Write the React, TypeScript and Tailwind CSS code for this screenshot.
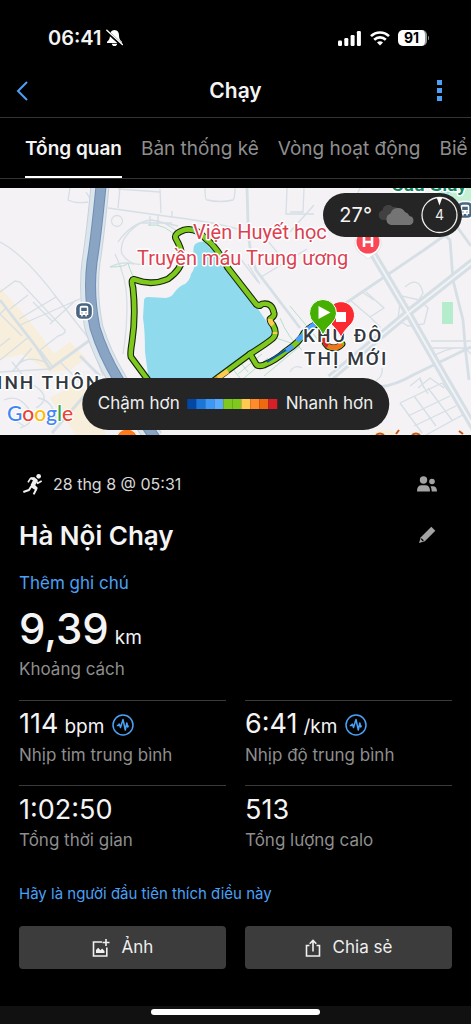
import type { ReactNode } from "react";

const paceColors = [
  "bg-[#0347a5]",
  "bg-[#1b76d9]",
  "bg-[#3d97f4]",
  "bg-[#59acff]",
  "bg-[#7fc91f]",
  "bg-[#7fc91f]",
  "bg-[#ffca4f]",
  "bg-[#ff8b2a]",
  "bg-[#ee690f]",
  "bg-[#d61f26]",
];

const tabs = ["Tổng quan", "Bản thống kê", "Vòng hoạt động", "Biể"];

const stats = [
  { value: "114", unit: "bpm", label: "Nhịp tim trung bình", chart: true },
  { value: "6:41", unit: "/km", label: "Nhịp độ trung bình", chart: true },
  { value: "1:02:50", unit: "", label: "Tổng thời gian", chart: false },
  { value: "513", unit: "", label: "Tổng lượng calo", chart: false },
];

function StatusBar() {
  return (
    <div className="flex h-16 items-end justify-between pr-[42px] pb-3 pl-12">
      <div className="flex h-7 items-center gap-1">
        <span className="text-xl font-semibold">06:41</span>
        <svg width="17" height="18" viewBox="0 0 17 18" aria-hidden="true">
          <path
            d="M8.500 1C5.500 1.200 4 3.400 4 6.200c0 3.200-.8 4.600-3 6.600v1.200h15v-1.200c-2.200-2-3-3.400-3-6.600C13 3.400 11.500 1.200 8.500 1zM5.800 14.700h5.400c-.3 1.600-1.300 2.300-2.700 2.300s-2.400-.7-2.700-2.300z"
            fill="#fff"
          />
          <path d="M.6 2.200l15.600 14.200" stroke="#000" strokeWidth="3" />
          <path d="M.8 1.200l15.600 14.400" stroke="#fff" strokeWidth="1.400" strokeLinecap="round" />
        </svg>
      </div>
      <div className="flex h-7 items-center gap-2">
        <svg width="24" height="15" viewBox="0 0 24 15" fill="#fff" aria-hidden="true">
          <rect x="0" y="9.500" width="4" height="5.500" rx="1.200" />
          <rect x="6.300" y="7" width="4" height="8" rx="1.200" />
          <rect x="12.600" y="4" width="4" height="11" rx="1.200" />
          <rect x="18.900" y="0" width="4" height="15" rx="1.200" />
        </svg>
        <svg width="20" height="15" viewBox="0 0 20 15" fill="none" stroke="#fff" strokeWidth="2.600" aria-hidden="true">
          <path d="M1 5.200C6 .2 14 .2 19 5.200" />
          <path d="M4.200 8.800c3.300-3.200 8.300-3.200 11.600 0" />
          <path d="M7 11.400c1.700-1.600 4.300-1.600 6 0L10 14.500z" fill="#fff" stroke="none" />
        </svg>
        <div className="flex items-center">
          <span className="flex h-4 w-[29px] items-center justify-center rounded-[5px] border-r-2 border-[#9a9a9a] bg-white text-sm font-bold text-black">
            91
          </span>
          <span className="ml-px h-1 w-px rounded-r bg-[#8a8a8a]" />
        </div>
      </div>
    </div>
  );
}

function BusStop({ x, y }: { x: number; y: number }) {
  return (
    <g transform={`translate(${x} ${y})`}>
      <rect x="-8.500" y="-8.500" width="17" height="17" rx="6" fill="#4a6580" stroke="#fff" strokeWidth="1.300" />
      <path d="M-4.300-3.500q0-1.700 2-1.700h4.600q2 0 2 1.700V4H2.800v1.500H1.300V4h-2.600v1.500h-1.500V4h-1.500z" fill="#fff" />
      <path d="M-2.800-3.300h5.600V0h-5.600z" fill="#4a6580" />
      <path d="M-2.600 2h1.200M1.400 2h1.200" stroke="#4a6580" strokeWidth="1.200" />
    </g>
  );
}

const route =
  "M148 192 L131 169 Q130 166 132 154 Q136 128 133 100 Q130 89 136 92 Q152 98 168 91 Q182 81 182 70 Q182 61 176 51 Q173 46 184 42 Q196 39 206 51 Q216 58 228 80 L256 116 Q259 119 262 116 Q272 114 274 125 Q275 128 270 131 Q270 134 273 137 Q278 146 272 151 Q266 156 250 166 L212 194";
const spur = "M250 166 L256 176 Q258 179 264 177 Q276 172 286 163 Q300 154 304 145 Q312 137 318 136 Q324 145 324 152 Q326 160 334 160 Q338 160 342 156";

function RouteMap() {
  return (
    <svg
      className="block h-[247px] w-full"
      viewBox="0 0 471 247"
      preserveAspectRatio="xMidYMid slice"
      role="img"
      aria-label="Bản đồ lộ trình"
    >
      <rect width="471" height="247" fill="#f4f2f4" />
      <g fill="#f7eedb">
        <path d="M0 100L22 124 38 144 54 166 70 154 86 170 70 182 50 184 22 166 0 172z" />
        <path d="M50 210l26-14 12 8 18 43H76l-14-20z" />
        <path d="M370 247q16-10 30 0z" />
      </g>
      <path d="M436 0h35v22l-28-6z" fill="#c4f0d6" />
      <path d="M440 3q8 6 20-3h-16z" fill="#8edced" />
      <rect x="442" y="114" width="11" height="22" fill="#b5eccb" />

      <g fill="none" stroke="#d5dfe5" strokeWidth="1.300">
        <path d="M0 54Q24 66 57 110L90 152 103 188M0 104L15 93 20 94 65 142Q66 146 58 148L40 162 52 178" />
        <path d="M10 121L28 107M19 131L56 109M20 137L82 110M33 114L53 134M50 136L76 112" />
        <path d="M0 126l22 22M6 120l-6 6M10 150l-10 8M30 148L0 172M60 174l20 20" />
        <path d="M70 0L68 12q8 4 20 2 M92 14l-6-10" />
        <path d="M108 20L172 29M120 0l-2 20M160 1l1 24M118 1l42 3M172 29v-6" />
        <circle cx="117" cy="33" r="5.500" />
        <path d="M118 54q14-20 34-22l26 6M122 66q-4-14 14-28t42 6M122 66q8 12 20 10" />
        <path d="M110 79q12-6 24-3M115 66q12 24 12 50t-4 50M150 28v10M158 28v10M142 35h30" />
        <path d="M205 0q0 12 2 12 14 3 26 0 2-2 2-12M287 0l-1 26h28M172 29q50 6 75 15" />
        <path d="M261 89l46-28M240 70l18 24M248 76l12 20M262 46l30 36" />
        <path d="M304 0l-1 24h-13M290 44l24-27M360 0l-8 18" />
        <path d="M350 112l20 17 14-9-18-16M370 129l10 10-14 10M362 104l12 8M405 99q14-12 18 6l-6 10" />
        <path d="M400 114l2-6 18 4 8 8-4 16-16 2-10-6z" />
        <path d="M431 153h40M431 160h40M430 170q30-18 41-4M426 153v8" />
        <path d="M400 215l42-20 24 30-40 22M400 215l22 30M414 208l22 30M428 200l24 32M408 228l42-20M414 238l42-20" />
        <path d="M418 200l12-10 14 10M410 198l10-8 4 10M420 192l8 14M382 180q2 10-12 16" />
        <path d="M0 184l50-3M20 200q10-8 20 2t-4 18M4 212q14-6 24 8t-8 20M38 210q14 2 18 20M8 228l16 10M290 184q4-8 12-4" />
        <path d="M45 174q-20-8-30 6M24 170l-12 14M32 160l-14 16M22 186l-10-12" />
      </g>
      <g fill="none" stroke="#d5dfe5" strokeWidth="2.800">
        <path d="M0 112L37 160 50 181 90 152M52 245L84 208M80 168l20 20" />
        <path d="M247 0l1 34q0 26 8 48l44 58" />
        <path d="M343 117L427 60 452 42M430 34l20 18 3 40 10 40q2 30 6 60M455 36l16 22" />
        <path d="M380 199q16-2 33-12l58-28" />
      </g>
      <g fill="none" stroke="#b4e0cb" strokeWidth="1">
        <path d="M148 37q18-2 30 14M110 79q16 0 18-4 4 14 8 16M280 130q8 20 22 32M290 118l30 36M276 150l24 8-36 30M238 186l24-20M244 190l24-20M232 180l8 10M240 174l8 10M248 170l8 10" />
      </g>

      <g fill="none" strokeLinejoin="round">
        <path d="M372 64L408 125 445 190 480 250M474 73L408 125 330 190" stroke="#d5dfe5" strokeWidth="8" />
        <path d="M372 64L408 125 445 190 480 250M474 73L408 125 330 190" stroke="#f1f3f5" strokeWidth="2" />
      </g>

      <g fill="none">
        <path d="M100-2Q95 50 91 74 87 106 94 140 102 166 117 191 134 222 154 250" stroke="#c6d3dd" strokeWidth="19" />
        <path d="M100-2Q95 50 91 74 87 106 94 140 102 166 117 191 134 222 154 250" stroke="#dbe5eb" strokeWidth="17" />
        <path d="M101-2Q96 50 92 74 88 106 95 140 103 166 118 191 135 222 155 250" stroke="#6f8eb5" strokeWidth="11" />
        <path d="M101-2Q96 50 92 74 88 106 95 140 103 166 118 191 135 222 155 250" stroke="#8aa5c3" strokeWidth="9" />
      </g>

      <path
        d="M144 113q0-4 4-4l18 1q6-1 8-5 5-7 11-9 5-4 6-10 4-5 4-13-4-16 2-18 8-4 12 4l14 12 18 25 32 47q2 5-4 8L212 194h-63l-4-30q0-22-2-34z"
        fill="#8fdaed"
      />

      <g fill="none" strokeLinejoin="round" strokeLinecap="round">
        <path d={route} stroke="#15240a" strokeWidth="6.800" />
        <path d={spur} stroke="#15240a" strokeWidth="6.800" />
        <path d={route} stroke="#7fc91f" strokeWidth="4.600" />
        <path d={spur} stroke="#7fc91f" strokeWidth="4.600" />
        <g strokeLinecap="butt" strokeWidth="4.600">
          <path d="M270 131Q270 134 273 137M275 144l0 2" stroke="#ffca4f" />
          <path d="M228 183L218 190" stroke="#ffca4f" />
          <path d="M218 190l-6 5" stroke="#ff8b2a" />
          <path d="M286 163L293 158M297 153L303 147M307 142Q312 137 316 136" stroke="#4ba1fb" />
          <path d="M267 174L286 162" stroke="#0a54ae" strokeWidth="2" />
          <path d="M324 150Q325 156 328 158" stroke="#d61f26" />
          <path d="M328 158Q336 162 342 156" stroke="#f4741c" />
        </g>
      </g>

      <BusStop x={84} y={123} />
      <BusStop x={465} y={22} />

      <g>
        <path d="M368 68q-3-3-7-5a13 13 0 1 1 14 0q-4 2-7 5z" transform="translate(0 3)" fill="#fff" stroke="#d8d2d4" strokeWidth=".6" />
        <circle cx="368" cy="54" r="11.500" fill="#fb4655" />
        <path d="M364 49v10M372 49v10M364 54h8" stroke="#fff" strokeWidth="2.600" />
      </g>
      <circle cx="127" cy="252" r="11" fill="#ff7a1a" stroke="#fff" />
      <path d="M396 246l3-4M376 247q4-3 8 0M412 247q4-3 8 0M459 243l4 3" stroke="#c9560c" strokeWidth="2" fill="none" />

      <g fontFamily="Roboto, sans-serif" stroke="#fff" strokeWidth="3" strokeLinejoin="round" paintOrder="stroke">
        <text x="429" y="3" textAnchor="middle" fontSize="19" fontWeight="600" fill="#0f8560">Cầu Giấy</text>
        <text x="193" y="51" fontSize="20" fill="#dc3f52">Viện Huyết học</text>
        <text x="137" y="77" fontSize="20" fill="#dc3f52">Truyền máu Trung ương</text>
        <g fontSize="19" fontWeight="500" fill="#33383f" className="tracking-[2px]">
          <text x="303" y="154">KHU ĐÔ</text>
          <text x="304" y="177">THỊ MỚI</text>
          <text x="-3" y="201">INH THÔN</text>
        </g>
      </g>

      <g stroke="#fff" strokeWidth="1">
        <path d="M341 149q-3-6-8-11a13.500 13.500 0 1 1 16 0q-5 5-8 11z" fill="#fb2a30" />
        <path d="M323 147q-3-7-9-12a13.500 13.500 0 1 1 18 0q-6 5-9 12z" fill="#45b002" />
      </g>
      <rect x="336" y="124" width="10" height="10" fill="#fff" />
      <path d="M318.500 118v13l12-6.500z" fill="#fff" />

      <text x="7" y="233" fontFamily="Lato, sans-serif" fontSize="21" fontWeight="500" stroke="#fff" strokeWidth="2" paintOrder="stroke">
        <tspan fill="#4285f4">G</tspan>
        <tspan fill="#ea4335">o</tspan>
        <tspan fill="#fbbc05">o</tspan>
        <tspan fill="#4285f4">g</tspan>
        <tspan fill="#34a853">l</tspan>
        <tspan fill="#ea4335">e</tspan>
      </text>
    </svg>
  );
}

function Weather() {
  return (
    <div className="absolute top-[5px] right-[9px] flex h-11 items-center gap-1.5 rounded-full bg-[#252525] pr-1 pl-4">
      <span className="text-xl">27°</span>
      <svg width="37" height="20" viewBox="0 0 37 20" aria-hidden="true">
        <path d="M5 15a5 5 0 0 1-.5-9.800A6 6 0 0 1 15 2a6 6 0 0 1 7 5v8z" fill="#414141" />
        <path d="M13 20a6 6 0 0 1-.5-11.500A8 8 0 0 1 27 7a6.500 6.500 0 0 1 4.500 4A4.600 4.600 0 0 1 32 20z" fill="#747474" />
      </svg>
      <svg width="37" height="38" viewBox="0 0 37 38" aria-label="Gió 4">
        <circle cx="18.500" cy="19" r="17.500" fill="none" stroke="#eee" strokeWidth="1.300" />
        <path d="M15.700 1.500h5.600l-2.800 8z" fill="#fff" />
        <text x="18.500" y="24" textAnchor="middle" fontSize="14" fill="#eee">4</text>
      </svg>
    </div>
  );
}

function PaceLegend() {
  return (
    <div className="absolute bottom-[5px] left-1/2 flex h-[52px] -translate-x-1/2 items-center gap-2 rounded-full bg-[#252525] px-4 text-[17px] whitespace-nowrap text-[#eee]">
      <span>Chậm hơn</span>
      <span className="flex">
        {paceColors.map((color, i) => (
          <span key={i} className={`h-[10px] w-[9px] ${color}`} />
        ))}
      </span>
      <span>Nhanh hơn</span>
    </div>
  );
}

function Runner() {
  return (
    <svg width="20" height="21" viewBox="0 0 60 63" fill="none" stroke="#f2f2f2" strokeLinejoin="round" aria-hidden="true">
      <circle cx="47" cy="7" r="7" fill="#f2f2f2" stroke="none" />
      <path d="M24 12l10 0 8 7-8 15 8 8-3 5-13-8-1-6 7-14z" fill="#f2f2f2" strokeWidth="4" />
      <path d="M34 14L22 14 15 25" strokeWidth="5" />
      <path d="M39 18l5 10 12-7" strokeWidth="5" />
      <path d="M35 38l5 7-8 16" strokeWidth="6" />
      <path d="M25 37l-7 11L1 54" strokeWidth="6" />
    </svg>
  );
}

function PulseIcon() {
  return (
    <svg width="22" height="22" viewBox="0 0 22 22" fill="none" stroke="#4ba1f5" aria-hidden="true">
      <circle cx="11" cy="11" r="10" strokeWidth="1.500" />
      <path
        d="M4.800 11.500h1.500l1-1.500 1.200 3.500L11 5.500l2.300 10.500 1.500-7 1 4 .8-1.500"
        strokeWidth="1.500"
        strokeLinejoin="round"
      />
    </svg>
  );
}

function ActionButton({ icon, children }: { icon: ReactNode; children: ReactNode }) {
  return (
    <button type="button" className="flex h-[43px] items-center justify-center gap-3 rounded bg-[#3c3c3c] text-[17px] text-[#eee]">
      {icon}
      {children}
    </button>
  );
}

export default function App() {
  return (
    <div className="flex min-h-screen flex-col overflow-hidden bg-black font-['Inter','Liberation_Sans',sans-serif] text-[#f4f4f4]">
      <StatusBar />

      <header className="flex h-[54px] items-center justify-between border-b border-[#333] px-4">
        <button type="button" aria-label="Quay lại" className="flex w-8">
          <svg width="12" height="20" viewBox="0 0 12 20" fill="none" stroke="#4ba1f5" strokeWidth="2">
            <path d="M11 1L2 10l9 9" />
          </svg>
        </button>
        <h1 className="text-[21px] font-semibold">Chạy</h1>
        <button type="button" aria-label="Thêm" className="flex w-8 justify-center">
          <svg width="5" height="22" viewBox="0 0 5 22" fill="#4ba1f5">
            <path d="M0 0h5v5H0zM0 8h5v5H0zM0 16h5v5H0z" />
          </svg>
        </button>
      </header>

      <nav className="flex h-[61px] gap-[19px] overflow-hidden border-b border-[#333] pl-[25px] text-[19px] whitespace-nowrap">
        {tabs.map((tab, i) => (
          <a
            key={tab}
            href="#"
            className={
              i === 0
                ? "flex items-center border-b-2 border-white pt-1 font-semibold text-[#f4f4f4]"
                : "flex items-center border-b-2 border-transparent pt-1 text-[#8e8e8e]"
            }
          >
            {tab}
          </a>
        ))}
      </nav>

      <section className="relative mt-[9px]">
        <RouteMap />
        <Weather />
        <PaceLegend />
      </section>

      <main className="flex flex-1 flex-col px-[19px] pt-9">
        <div className="flex h-[26px] items-center justify-between pr-3.5 pl-1">
          <div className="flex items-center gap-2.5">
            <Runner />
            <span className="text-base text-[#d8d8d8]">28 thg 8 @ 05:31</span>
          </div>
          <svg width="22" height="16" viewBox="0 0 22 16" fill="#a3a3a3" aria-hidden="true">
            <circle cx="7.500" cy="4" r="3.700" />
            <circle cx="16" cy="5.500" r="2.800" />
            <path d="M1 15.500Q1 9.500 5 9.300h5q4 .2 4 6.200zM14.500 10.200h3q3.500.5 3.500 5.300h-5.200q-.1-3.500-1.300-5.300z" />
          </svg>
        </div>

        <div className="mt-[18px] flex h-10 items-center justify-between pr-4">
          <h2 className="text-[26px] font-semibold">Hà Nội Chạy</h2>
          <button type="button" aria-label="Chỉnh sửa">
            <svg width="18" height="18" viewBox="0 0 18 18">
              <path d="M13.300.8l4 4L6.800 15.300 1 17l1.800-5.800z" fill="#a3a3a3" />
              <path d="M2.800 13.200l.8-1 2.300 2.300-1.200.8z" fill="#000" />
            </svg>
          </button>
        </div>

        <a href="#" className="mt-4 self-start text-[17px] leading-6 text-[#4ba1f5]">Thêm ghi chú</a>

        <p className="mt-2 flex h-[52px] items-baseline gap-1.5 leading-[52px]">
          <span className="text-[42px] font-medium">9,39</span>
          <span className="text-[19px]">km</span>
        </p>
        <p className="mt-0.5 text-[17px] leading-6 text-[#8e8e8e]">Khoảng cách</p>

        <dl className="mt-[19px] grid grid-cols-2 gap-x-[19px]">
          {stats.map((stat) => (
            <div key={stat.label} className="flex h-[85px] flex-col-reverse justify-end border-t border-[#3a3a3a] pt-2">
              <dt className="text-[17px] leading-7 text-[#8e8e8e]">{stat.label}</dt>
              <dd className="flex h-8 items-center gap-2">
                <span className="flex items-baseline gap-1.5 leading-8">
                  <span className="text-[27px]">{stat.value}</span>
                  {stat.unit && <span className="text-[19px]">{stat.unit}</span>}
                </span>
                {stat.chart && <PulseIcon />}
              </dd>
            </div>
          ))}
        </dl>

        <a href="#" className="mt-3 self-start text-[15px] leading-6 text-[#4ba1f5]">
          Hãy là người đầu tiên thích điều này
        </a>

        <div className="mt-5 grid grid-cols-2 gap-[19px]">
          <ActionButton
            icon={
              <svg width="18" height="18" viewBox="0 0 18 18" fill="none" stroke="#f0f0f0" strokeWidth="1.600" aria-hidden="true">
                <path d="M10 3H1.500v14h13.300V8.500M14 0v7M10.500 3.500h7" />
                <path d="M4 14V11l2.200-2.200 2.300 2.400 1.600-1.700 2.400 2.500v2z" fill="#f0f0f0" stroke="none" />
              </svg>
            }
          >
            Ảnh
          </ActionButton>
          <ActionButton
            icon={
              <svg width="16" height="18" viewBox="0 0 16 18" fill="none" stroke="#f0f0f0" strokeWidth="1.600" aria-hidden="true">
                <path d="M4.500 6.500h-3v10.500h13V6.500h-3M8 12.500V1.800M4.700 4.800L8 1.500l3.300 3.300" />
              </svg>
            }
          >
            Chia sẻ
          </ActionButton>
        </div>
      </main>

      <footer className="flex h-[18px] justify-center bg-[#111] pt-[3px]">
        <span className="h-1.5 w-[169px] rounded-full bg-white" />
      </footer>
    </div>
  );
}
